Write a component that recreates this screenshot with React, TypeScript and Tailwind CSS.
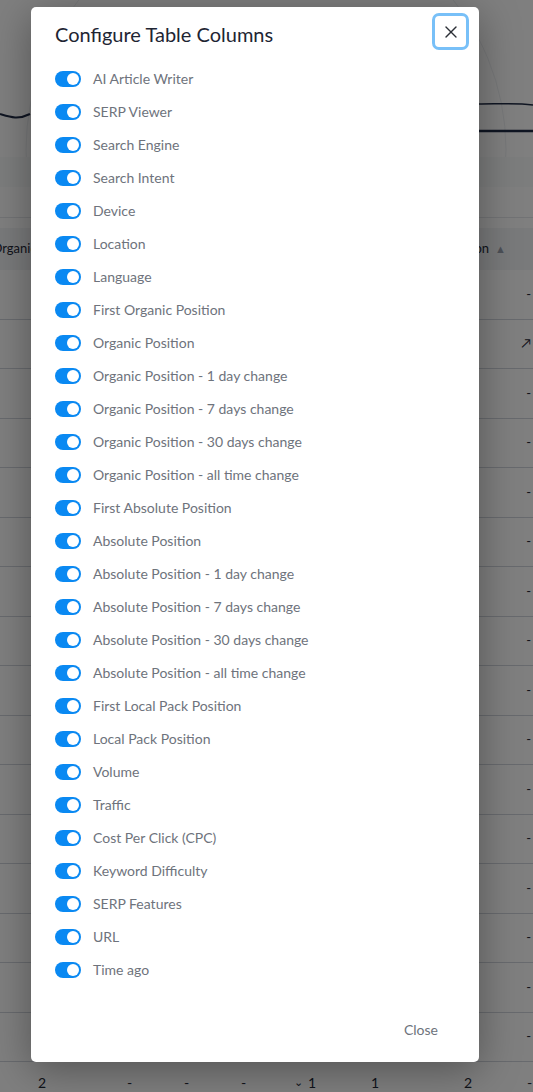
import { X } from 'lucide-react';

const columns = [
  'AI Article Writer',
  'SERP Viewer',
  'Search Engine',
  'Search Intent',
  'Device',
  'Location',
  'Language',
  'First Organic Position',
  'Organic Position',
  'Organic Position - 1 day change',
  'Organic Position - 7 days change',
  'Organic Position - 30 days change',
  'Organic Position - all time change',
  'First Absolute Position',
  'Absolute Position',
  'Absolute Position - 1 day change',
  'Absolute Position - 7 days change',
  'Absolute Position - 30 days change',
  'Absolute Position - all time change',
  'First Local Pack Position',
  'Local Pack Position',
  'Volume',
  'Traffic',
  'Cost Per Click (CPC)',
  'Keyword Difficulty',
  'SERP Features',
  'URL',
  'Time ago',
];

function Toggle() {
  return (
    <span className="flex h-[16px] w-[26px] shrink-0 items-center justify-end rounded-full bg-[#0a89f2] px-[2px]">
      <span className="h-[12px] w-[12px] rounded-full bg-white" />
    </span>
  );
}

function BackgroundPage() {
  return (
    <div className="flex h-full flex-col bg-white text-[#1f2937]">
      {/* rank chart */}
      <svg className="h-[157px] w-full shrink-0" viewBox="0 0 533 157" fill="none">
        <circle cx="266" cy="150" r="240" stroke="#eef0f3" strokeWidth="1" />
        <path d="M0 114 C10 117 18 120 30 114" stroke="#1f2a44" strokeWidth="2" />
        <path d="M478 104 C500 104 515 103 533 105" stroke="#1f2a44" strokeWidth="1.5" />
        <path d="M478 131 L533 131" stroke="#1f2a44" strokeWidth="2.5" />
      </svg>
      <div className="h-[30px] shrink-0 bg-gray-50" />
      <div className="h-[31px] shrink-0 border-b border-gray-200" />
      <div className="h-[10px] shrink-0" />
      {/* table head */}
      <div className="flex h-[42px] shrink-0 items-center justify-between bg-gray-100 text-[13px]">
        <span className="-ml-[8px]">Organic</span>
        <span className="flex items-center gap-[6px] pr-[27px]">
          Position
          <span className="text-[11px] text-gray-400">▲</span>
        </span>
      </div>
      {Array.from({ length: 16 }).map((_, i) => (
        <div key={i} className="flex h-[49.5px] shrink-0 items-center justify-end border-b border-gray-300 pr-[2px] text-[13px]">
          {i === 1 ? '↗' : '-'}
        </div>
      ))}
      <div className="relative flex h-[40px] shrink-0 items-center text-[14px]">
        <span className="absolute left-[38px]">2</span>
        <span className="absolute left-[127px]">-</span>
        <span className="absolute left-[184px]">-</span>
        <span className="absolute left-[241px]">-</span>
        <span className="absolute left-[294px] text-[11px]">⌄</span>
        <span className="absolute left-[308px]">1</span>
        <span className="absolute left-[371px]">1</span>
        <span className="absolute left-[464px]">2</span>
        <span className="absolute left-[527px]">-</span>
      </div>
    </div>
  );
}

export default function App() {
  return (
    <div className="relative h-[1092px] w-[533px] overflow-hidden" style={{ fontFamily: 'Lato, "Open Sans", sans-serif' }}>
      <BackgroundPage />
      <div className="absolute inset-0 bg-black/50" />

      <div className="absolute left-[31px] top-[7px] flex h-[1055px] w-[448px] flex-col rounded-[5px] bg-white shadow-[0_8px_40px_rgba(0,0,0,0.35)]">
        <div className="relative px-6 pt-[13px]">
          <h2 className="text-[20px] leading-7 text-[#1e2533]">Configure Table Columns</h2>
          <button className="absolute right-[10px] top-[6px] flex h-[37px] w-[37px] items-center justify-center rounded-[7px] border-[3px] border-[#78c0f8] text-[#2b2f36]">
            <X size={20} strokeWidth={1.6} />
          </button>
        </div>

        <ul className="mt-[14px] flex flex-col px-6">
          {columns.map(name => (
            <li key={name} className="flex h-[33px] items-center gap-[12px]">
              <Toggle />
              <span className="text-[14px] text-[#6e737c]">{name}</span>
            </li>
          ))}
        </ul>

        <div className="mt-auto flex justify-end pb-[22px] pr-[41px]">
          <button className="text-[14px] leading-5 text-[#6e737c]">Close</button>
        </div>
      </div>
    </div>
  );
}
